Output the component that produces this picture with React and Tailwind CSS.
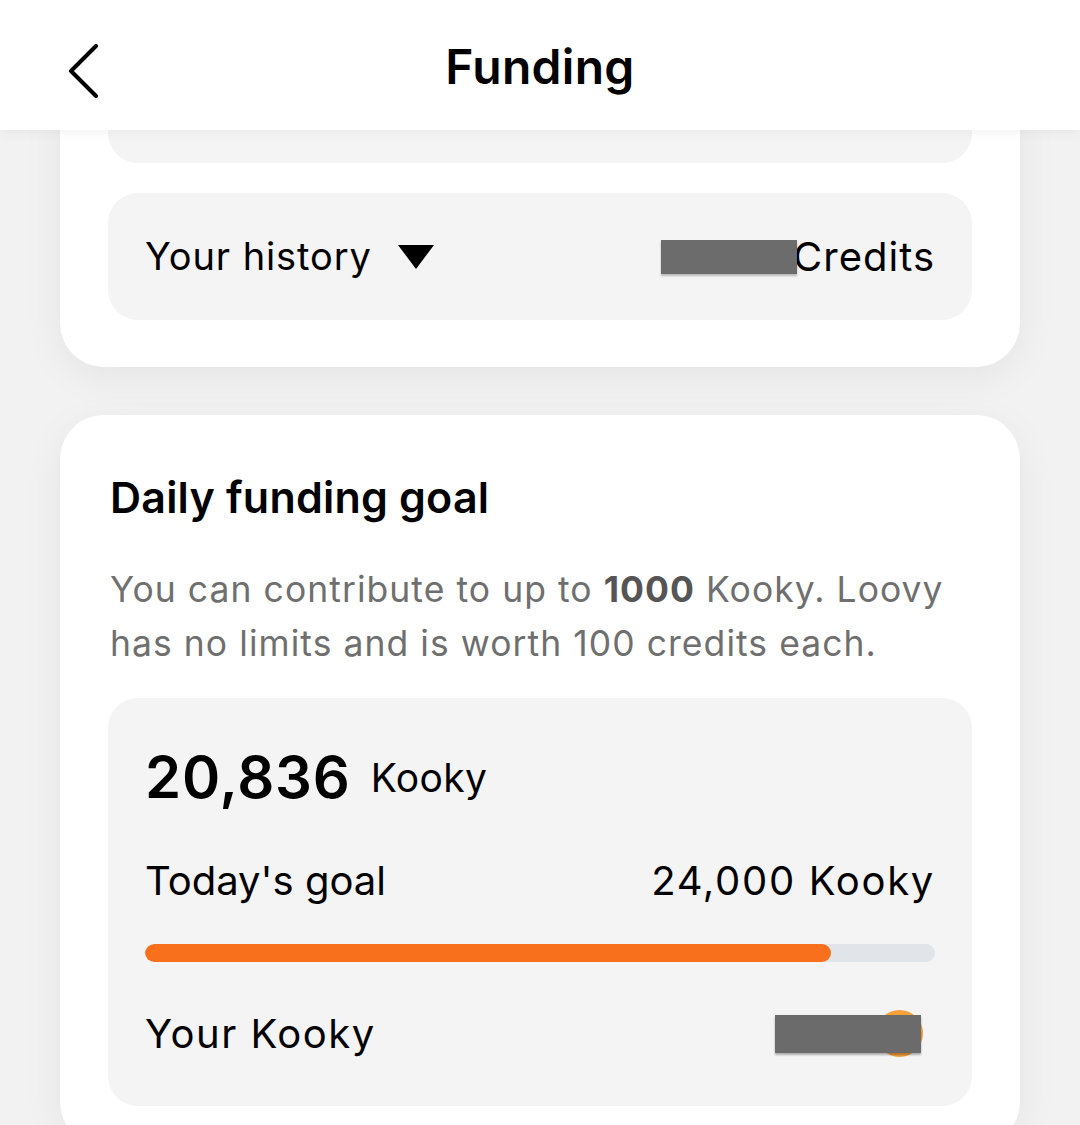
import React from "react"

const font = { fontFamily: "Inter, 'Noto Sans', sans-serif" }

export default function App() {
  const raised = 20836
  const goal = 24000
  const pct = (raised / goal) * 100

  return (
    <div className="w-[1080px] h-[1125px] overflow-hidden bg-[#f2f2f2] text-black" style={font}>
      {/* header */}
      <div className="relative z-10 h-[130px] bg-white flex items-center justify-center shadow-[0_4px_10px_rgba(0,0,0,0.04)]">
        <button className="absolute left-[62px] top-[40px] p-1">
          <svg width="40" height="60" viewBox="0 0 40 60" fill="none">
            <path d="M30 2 L5 27 L30 52" stroke="#000" strokeWidth="4" strokeLinecap="round" strokeLinejoin="round" />
          </svg>
        </button>
        <h1 className="text-[48px] font-semibold tracking-[0.3px] leading-none pt-[4px]">Funding</h1>
      </div>

      <div className="px-[60px]">
        {/* first card, partly scrolled under the header */}
        <div className="-mt-[120px] bg-white rounded-[44px] px-[48px] pt-[48px] pb-[47px] shadow-[0_10px_40px_rgba(0,0,0,0.06)]">
          <div className="h-[105px] bg-[#f4f4f4] rounded-[30px]"></div>
          <div className="mt-[30px] h-[127px] bg-[#f4f4f4] rounded-[30px] pl-[37px] pr-[37px] flex items-center justify-between">
            <div className="flex items-center gap-[26px]">
              <span className="text-[38px] tracking-[0.9px]">Your history</span>
              <svg width="36" height="24" viewBox="0 0 36 24">
                <path d="M0 0 H36 L18 24 Z" fill="#000" />
              </svg>
            </div>
            <div className="flex items-center">
              <span className="relative z-[1] w-[136px] h-[34px] bg-[#6c6c6c] shadow-[0_2px_2px_rgba(0,0,0,0.25)] -mr-[4px]"></span>
              <span className="text-[40px] tracking-[1px]">Credits</span>
            </div>
          </div>
        </div>

        {/* daily funding goal */}
        <div className="mt-[48px] bg-white rounded-[44px] px-[48px] pt-[61px] pb-[40px] shadow-[0_10px_40px_rgba(0,0,0,0.06)]">
          <h2 className="text-[43px] font-semibold leading-none pl-[2px] tracking-[0.2px]">Daily funding goal</h2>
          <p className="mt-[44px] text-[35.5px] leading-[54px] text-[#6f6f6f] pl-[2px] tracking-[1.05px]">
            You can contribute to up to <span className="font-bold text-[#555]">1000</span> Kooky. Loovy has no limits and is worth 100 credits each.
          </p>

          <div className="mt-[27px] bg-[#f4f4f4] rounded-[30px] px-[37px] pt-[50px] pb-[47px]">
            <div className="flex items-baseline gap-[20px]">
              <span className="text-[58px] font-semibold leading-none tracking-[0.8px]">20,836</span>
              <span className="text-[39px] leading-none tracking-[0.4px] -translate-y-[6px]">Kooky</span>
            </div>

            <div className="mt-[55px] flex items-center justify-between text-[40px] leading-none">
              <span>Today's goal</span>
              <span className="tracking-[1.7px]">24,000 Kooky</span>
            </div>

            <div className="mt-[43px] h-[18px] rounded-full bg-[#e1e4e9] overflow-hidden">
              <div className="h-full rounded-full bg-[#f86f1c]" style={{ width: `${pct}%` }}></div>
            </div>

            <div className="mt-[47px] flex items-center justify-between">
              <span className="text-[40px] leading-none tracking-[1.5px]">Your Kooky</span>
              <div className="relative w-[147px] h-[50px] mr-[13px] flex items-center">
                <span className="absolute -right-[1px] top-[1px] w-[47px] h-[47px] rounded-full bg-[#f8a03a]"></span>
                <span className="relative w-[146px] h-[38px] bg-[#6b6b6b] shadow-[0_2px_2px_rgba(0,0,0,0.3)]"></span>
              </div>
            </div>
          </div>
        </div>
      </div>
    </div>
  )
}
